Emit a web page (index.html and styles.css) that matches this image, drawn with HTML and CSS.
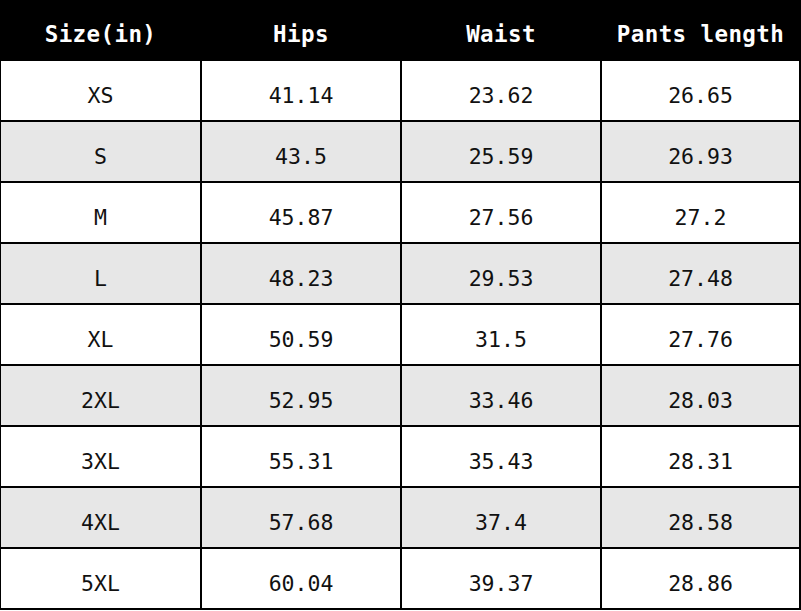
FILE: index.html
```html
<!DOCTYPE html>
<html lang="en">
<head>
<meta charset="utf-8">
<title>Size chart</title>
<link rel="stylesheet" href="styles.css">
</head>
<body>
<div class="chart">
  <div class="row head">
    <div class="cell">Size(in)</div>
    <div class="cell">Hips</div>
    <div class="cell">Waist</div>
    <div class="cell">Pants length</div>
  </div>
  <div class="row">
    <div class="cell">XS</div><div class="cell">41.14</div><div class="cell">23.62</div><div class="cell">26.65</div>
  </div>
  <div class="row alt">
    <div class="cell">S</div><div class="cell">43.5</div><div class="cell">25.59</div><div class="cell">26.93</div>
  </div>
  <div class="row">
    <div class="cell">M</div><div class="cell">45.87</div><div class="cell">27.56</div><div class="cell">27.2</div>
  </div>
  <div class="row alt">
    <div class="cell">L</div><div class="cell">48.23</div><div class="cell">29.53</div><div class="cell">27.48</div>
  </div>
  <div class="row">
    <div class="cell">XL</div><div class="cell">50.59</div><div class="cell">31.5</div><div class="cell">27.76</div>
  </div>
  <div class="row alt">
    <div class="cell">2XL</div><div class="cell">52.95</div><div class="cell">33.46</div><div class="cell">28.03</div>
  </div>
  <div class="row">
    <div class="cell">3XL</div><div class="cell">55.31</div><div class="cell">35.43</div><div class="cell">28.31</div>
  </div>
  <div class="row alt">
    <div class="cell">4XL</div><div class="cell">57.68</div><div class="cell">37.4</div><div class="cell">28.58</div>
  </div>
  <div class="row">
    <div class="cell">5XL</div><div class="cell">60.04</div><div class="cell">39.37</div><div class="cell">28.86</div>
  </div>
</div>
</body>
</html>
```

FILE: styles.css
```css
html, body {
  margin: 0;
  padding: 0;
  background: #ffffff;
}

.chart {
  width: 801px;
  font-family: "DejaVu Sans Mono", "Liberation Mono", monospace;
  font-size: 21.5px;
  color: #111111;
}

.row {
  display: grid;
  grid-template-columns: 202px 200px 200px 199px;
  height: 61px;
  background: #ffffff;
}

.row.alt {
  background: #e7e7e7;
}

.cell {
  display: flex;
  align-items: center;
  justify-content: center;
  box-sizing: border-box;
  padding-top: 9px;
  border-right: 2px solid #000000;
  border-bottom: 2px solid #000000;
}

.cell:first-child {
  border-left: 1px solid #000000;
}

.row.head {
  background: #000000;
  color: #ffffff;
  font-weight: bold;
  font-size: 22.5px;
  letter-spacing: 0.4px;
}

.row.head .cell {
  padding-top: 8px;
}
```
